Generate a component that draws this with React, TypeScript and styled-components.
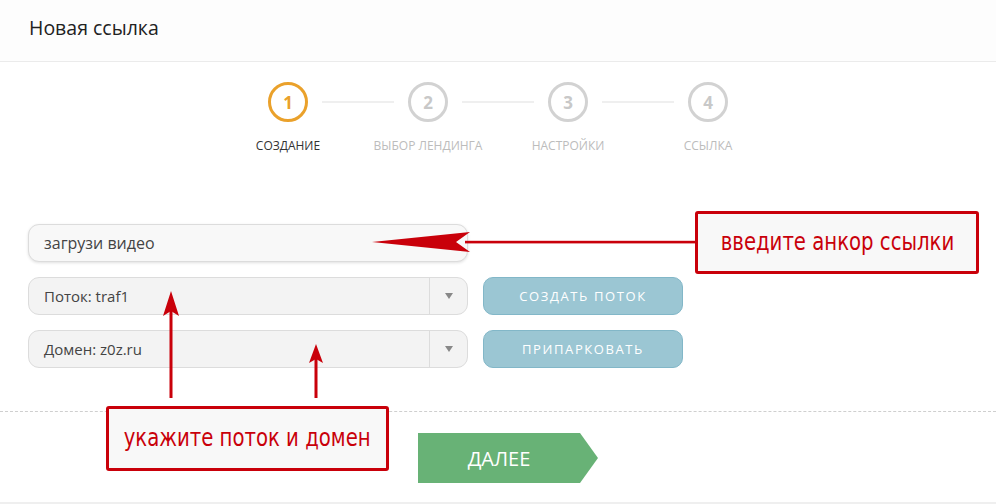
import React from "react";
import styled, { createGlobalStyle } from "styled-components";

const GlobalStyle = createGlobalStyle`
  html, body {
    margin: 0;
    padding: 0;
    background: #fff;
    font-family: "Open Sans", "Noto Sans", Arial, sans-serif;
  }
`;

const Page = styled.div`
  position: relative;
  width: 996px;
  height: 504px;
  overflow: hidden;
  background: #fff;
`;

const Header = styled.div`
  height: 62px;
  box-sizing: border-box;
  padding: 0 29px;
  display: flex;
  align-items: center;
  background: #fdfdfd;
  border-bottom: 1px solid #ebebeb;
`;

const Title = styled.h1`
  margin: 0 0 6px;
  font-size: 19.5px;
  font-weight: 400;
  color: #222;
`;

const Steps = styled.div`
  height: 162px;
  box-sizing: border-box;
  padding-top: 20px;
  display: flex;
  flex-direction: column;
  align-items: center;
`;

const Track = styled.div`
  display: flex;
  align-items: center;
`;

const Circle = styled.div<{ $active?: boolean }>`
  width: 40px;
  height: 40px;
  box-sizing: border-box;
  border-radius: 50%;
  border: 3px solid ${(p) => (p.$active ? "#eaa12b" : "#d2d2d2")};
  color: ${(p) => (p.$active ? "#eaa12b" : "#c8c8c8")};
  display: flex;
  align-items: center;
  justify-content: center;
  font-size: 17px;
  font-weight: 700;
`;

const Connector = styled.div`
  width: 72px;
  height: 2px;
  margin: 0 14px;
  background: #efefef;
`;

const Labels = styled.div`
  display: flex;
  margin-top: 15px;
`;

const Label = styled.div<{ $active?: boolean }>`
  width: 140px;
  text-align: center;
  font-size: 12px;
  text-transform: uppercase;
  color: ${(p) => (p.$active ? "#333" : "#bcbcbc")};
`;

const Form = styled.div`
  height: 187px;
  box-sizing: border-box;
  padding-left: 28px;
  display: flex;
  flex-direction: column;
  gap: 15px;
`;

const Row = styled.div`
  display: flex;
  gap: 15px;
  flex-shrink: 0;
`;

const TextInput = styled.div`
  flex-shrink: 0;
  width: 440px;
  height: 38px;
  box-sizing: border-box;
  border: 1px solid #dcdcdc;
  border-radius: 11px;
  background: #f8f8f8;
  box-shadow: 0 1px 3px rgba(0, 0, 0, 0.12);
  padding: 0 15px;
  display: flex;
  align-items: center;
  font-size: 16px;
  color: #444;
`;

const Select = styled.div`
  width: 440px;
  height: 38px;
  box-sizing: border-box;
  border: 1px solid #dcdcdc;
  border-radius: 11px;
  background: #f3f3f3;
  display: flex;
  font-size: 15px;
  color: #444;
`;

const SelectValue = styled.div`
  flex: 1;
  padding: 0 15px;
  display: flex;
  align-items: center;
`;

const Caret = styled.div`
  width: 37px;
  border-left: 1px solid #dcdcdc;
  display: flex;
  align-items: center;
  justify-content: center;
  &::after {
    content: "";
    border-left: 4px solid transparent;
    border-right: 4px solid transparent;
    border-top: 6px solid #888;
  }
`;

const ActionButton = styled.div`
  width: 200px;
  height: 38px;
  box-sizing: border-box;
  border: 1px solid #82b7c8;
  border-radius: 10px;
  background: #9bc6d3;
  color: #fff;
  display: flex;
  align-items: center;
  justify-content: center;
  font-size: 13px;
  letter-spacing: 1.6px;
  text-transform: uppercase;
`;

const Footer = styled.div`
  border-top: 1px dashed #cfcfcf;
  border-bottom: 2px solid #efefef;
  height: 93px;
  box-sizing: border-box;
  padding: 21px 0 0 418px;
`;

const NextButton = styled.div`
  width: 180px;
  height: 50px;
  padding-right: 18px;
  box-sizing: border-box;
  background: #68b276;
  clip-path: polygon(0 0, 162px 0, 100% 50%, 162px 100%, 0 100%);
  color: #fff;
  display: flex;
  align-items: center;
  justify-content: center;
  font-size: 20px;
  text-transform: uppercase;
`;

const Callout = styled.div<{ $x: number; $y: number; $w: number; $h: number }>`
  position: absolute;
  left: ${(p) => p.$x}px;
  top: ${(p) => p.$y}px;
  width: ${(p) => p.$w}px;
  height: ${(p) => p.$h}px;
  box-sizing: border-box;
  border: 3px solid #c9000a;
  border-radius: 3px;
  background: #f8f8f8;
  display: flex;
  align-items: center;
  justify-content: center;
  color: #c9000a;
  font-family: "DejaVu Sans", "Liberation Sans", sans-serif;
  font-stretch: condensed;
  font-size: 25px;
  padding-bottom: 3px;
`;

const CalloutText = styled.span`
  display: inline-block;
  white-space: nowrap;
  transform: scaleX(0.875);
`;

const Arrows = styled.svg`
  position: absolute;
  left: 0;
  top: 0;
  pointer-events: none;
`;

const steps = ["Создание", "Выбор лендинга", "Настройки", "Ссылка"];

export default function App() {
  return (
    <Page>
      <GlobalStyle />
      <Header>
        <Title>Новая ссылка</Title>
      </Header>
      <Steps>
        <Track>
          {steps.map((s, i) => (
            <React.Fragment key={s}>
              {i > 0 && <Connector />}
              <Circle $active={i === 0}>{i + 1}</Circle>
            </React.Fragment>
          ))}
        </Track>
        <Labels>
          {steps.map((s, i) => (
            <Label key={s} $active={i === 0}>
              {s}
            </Label>
          ))}
        </Labels>
      </Steps>
      <Form>
        <TextInput>загрузи видео</TextInput>
        <Row>
          <Select>
            <SelectValue>Поток: traf1</SelectValue>
            <Caret />
          </Select>
          <ActionButton>Создать поток</ActionButton>
        </Row>
        <Row>
          <Select>
            <SelectValue>Домен: z0z.ru</SelectValue>
            <Caret />
          </Select>
          <ActionButton>Припарковать</ActionButton>
        </Row>
      </Form>
      <Footer>
        <NextButton>Далее</NextButton>
      </Footer>

      <Arrows width="996" height="504" viewBox="0 0 996 504">
        <g fill="#c9000a" stroke="none">
          <rect x="465" y="240.8" width="231" height="2.6" />
          <path d="M372 242 L470 232 L456 242 L470 252 Z" />
          <rect x="169.5" y="305" width="3" height="93" />
          <path d="M171 291 L179 316 L171 311 L163 316 Z" />
          <rect x="314.5" y="355" width="3" height="43" />
          <path d="M316 344 L323 363 L316 359 L309 363 Z" />
        </g>
      </Arrows>
      <Callout $x={695} $y={211} $w={284} $h={63}>
        <CalloutText>введите анкор ссылки</CalloutText>
      </Callout>
      <Callout $x={106} $y={406} $w={283} $h={65}>
        <CalloutText>укажите поток и домен</CalloutText>
      </Callout>
    </Page>
  );
}
